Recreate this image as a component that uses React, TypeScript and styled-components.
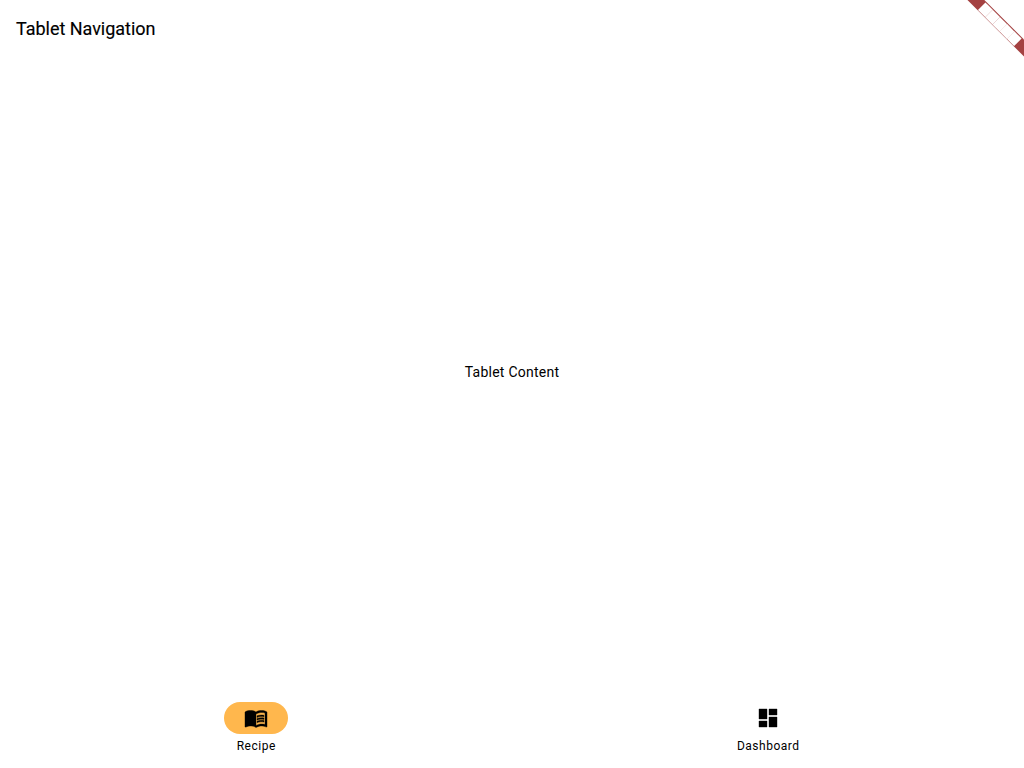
import React from "react";
import styled, { createGlobalStyle } from "styled-components";
import { MdDashboard, MdMenuBook } from "react-icons/md";

const GlobalStyle = createGlobalStyle`
  * { box-sizing: border-box; }
  body { margin: 0; background: #fff; }
`;

const Screen = styled.div`
  height: 100vh;
  display: flex;
  flex-direction: column;
  overflow: hidden;
  background: #fff;
  color: #000;
  font-family: Roboto, sans-serif;
`;

const AppBar = styled.header`
  height: 56px;
  display: flex;
  align-items: center;
  padding: 1px 16px 0;
`;

const Title = styled.h1`
  margin: 0;
  font-size: 18px;
  font-weight: 400;
  line-height: 28px;
  letter-spacing: -0.03px;
  -webkit-text-stroke: 0.15px #000;
`;

const Content = styled.main`
  flex: 1;
  display: flex;
  align-items: center;
  justify-content: center;
  font-size: 14px;
  line-height: 20px;
  letter-spacing: 0.25px;
`;

const NavBar = styled.nav`
  height: 80px;
  display: flex;
`;

const Destination = styled.button`
  flex: 1;
  display: flex;
  flex-direction: column;
  align-items: center;
  gap: 4px;
  padding: 14px 0 0;
  border: 0;
  background: transparent;
  color: inherit;
  font-family: inherit;
`;

const Indicator = styled.span<{ $active?: boolean }>`
  width: 64px;
  height: 32px;
  display: flex;
  align-items: center;
  justify-content: center;
  border-radius: 16px;
  background: ${(p) => (p.$active ? "#ffb74d" : "transparent")};

  path:not([fill="none"]) {
    stroke: #000;
    stroke-width: 0.4px;
  }
`;

const Label = styled.span`
  font-size: 12px;
  font-weight: 400;
  line-height: 16px;
  letter-spacing: 0.5px;
  padding-left: 0.5px;
`;

const Banner = styled.svg`
  position: absolute;
  top: 0;
  right: 0;
`;

const glyphs = [0, 1, 2, 3, 4];

export default function App() {
  return (
    <Screen>
      <GlobalStyle />
      <AppBar>
        <Title>Tablet Navigation</Title>
      </AppBar>
      <Content>Tablet Content</Content>
      <NavBar>
        <Destination>
          <Indicator $active>
            <MdMenuBook size={24} />
          </Indicator>
          <Label>Recipe</Label>
        </Destination>
        <Destination>
          <Indicator>
            <MdDashboard size={24} />
          </Indicator>
          <Label>Dashboard</Label>
        </Destination>
      </NavBar>
      <Banner width="64" height="64" viewBox="0 0 64 64" aria-hidden="true">
        <g transform="translate(64 0) rotate(45)">
          <rect x="-40" y="28" width="80" height="12" fill="#a44141" />
          {glyphs.map((i) => (
            <rect key={i} x={-25.5 + i * 10.2} y="29" width="10.3" height="10.6" fill="#fff" />
          ))}
        </g>
      </Banner>
    </Screen>
  );
}
